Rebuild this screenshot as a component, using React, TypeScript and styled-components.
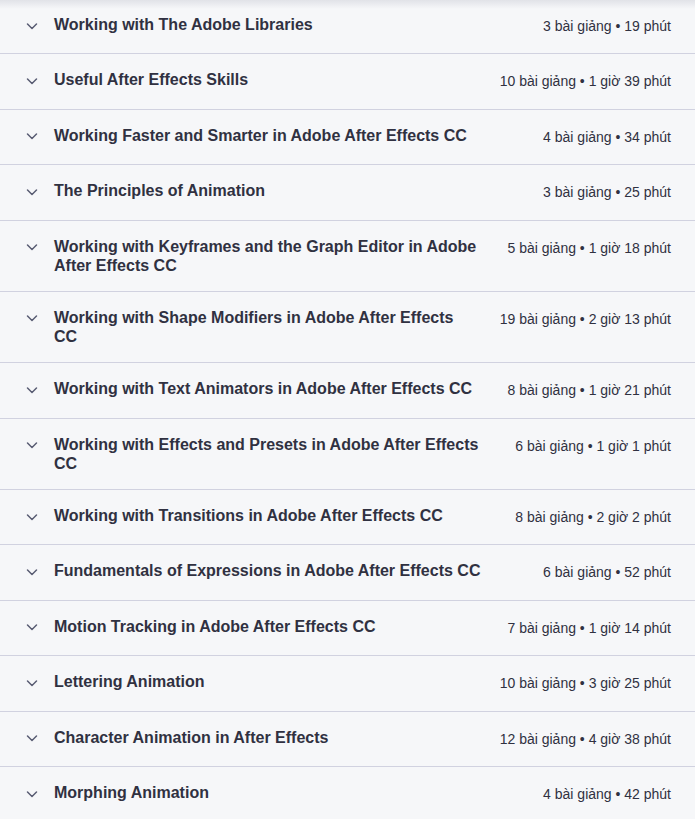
import React from "react";
import styled, { createGlobalStyle } from "styled-components";

const Global = createGlobalStyle`
  html, body { margin: 0; padding: 0; background: #f6f7f9; }
  body { font-family: "Liberation Sans", Arial, Helvetica, sans-serif; color: #303141; }
`;

const Curriculum = styled.div`
  position: relative;
  background: #f6f7f9;
  margin-top: -1px;
  &::before {
    content: "";
    position: absolute;
    left: 0;
    right: 0;
    top: 1px;
    height: 9px;
    background: linear-gradient(to bottom, rgba(40, 44, 80, 0.1), rgba(40, 44, 80, 0));
    pointer-events: none;
  }
`;

const Section = styled.div`
  border-bottom: 1px solid #d1d2e0;
`;

const Header = styled.div`
  display: flex;
  align-items: flex-start;
  padding: 16px 24px;
  min-height: 22.4px;
`;

const Chevron = styled.span`
  flex: none;
  width: 16px;
  height: 21px;
  display: flex;
  align-items: center;
  justify-content: center;
  margin-right: 14px;
  color: #595c73;
`;

const Title = styled.h3`
  flex: 1;
  margin: 0;
  font-size: 16px;
  font-weight: 700;
  line-height: 1.2;
  color: #303141;
`;

const Meta = styled.span`
  flex: none;
  margin-left: 24px;
  padding-top: 2px;
  font-size: 14px;
  line-height: 19.2px;
  color: #303141;
  white-space: nowrap;
`;

const sections: [string, string][] = [
  ["Working with The Adobe Libraries", "3 bài giảng • 19 phút"],
  ["Useful After Effects Skills", "10 bài giảng • 1 giờ 39 phút"],
  ["Working Faster and Smarter in Adobe After Effects CC", "4 bài giảng • 34 phút"],
  ["The Principles of Animation", "3 bài giảng • 25 phút"],
  ["Working with Keyframes and the Graph Editor in Adobe After Effects CC", "5 bài giảng • 1 giờ 18 phút"],
  ["Working with Shape Modifiers in Adobe After Effects CC", "19 bài giảng • 2 giờ 13 phút"],
  ["Working with Text Animators in Adobe After Effects CC", "8 bài giảng • 1 giờ 21 phút"],
  ["Working with Effects and Presets in Adobe After Effects CC", "6 bài giảng • 1 giờ 1 phút"],
  ["Working with Transitions in Adobe After Effects CC", "8 bài giảng • 2 giờ 2 phút"],
  ["Fundamentals of Expressions in Adobe After Effects CC", "6 bài giảng • 52 phút"],
  ["Motion Tracking in Adobe After Effects CC", "7 bài giảng • 1 giờ 14 phút"],
  ["Lettering Animation", "10 bài giảng • 3 giờ 25 phút"],
  ["Character Animation in After Effects", "12 bài giảng • 4 giờ 38 phút"],
  ["Morphing Animation", "4 bài giảng • 42 phút"],
];

const ChevronIcon = () => (
  <svg width="16" height="16" viewBox="0 0 16 16" fill="none">
    <polyline points="3.5,6 8,10.5 12.5,6" stroke="currentColor" strokeWidth="1.5" strokeLinecap="round" strokeLinejoin="round" />
  </svg>
);

export default function App() {
  return (
    <>
      <Global />
      <Curriculum>
        {sections.map(([title, meta]) => (
          <Section key={title}>
            <Header>
              <Chevron>
                <ChevronIcon />
              </Chevron>
              <Title>{title}</Title>
              <Meta>{meta}</Meta>
            </Header>
          </Section>
        ))}
      </Curriculum>
    </>
  );
}
